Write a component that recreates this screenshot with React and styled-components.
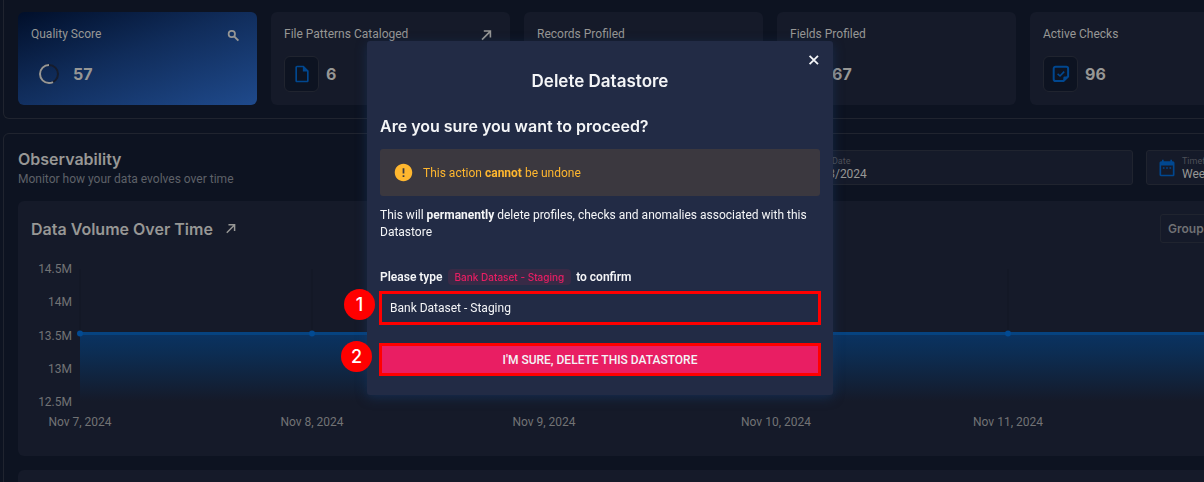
import React from "react";
import styled, { createGlobalStyle } from "styled-components";
import { MdDateRange, MdError, MdOutlineInsertDriveFile } from "react-icons/md";

const c = {
  page: "#0d1321",
  card: "#151a29",
  line: "#20242f",
  text: "#979795",
  muted: "#5e6168",
  axis: "#727375",
  blue: "#01478f",
  dialog: "#222b45",
  pink: "#e91e63",
  red: "#ff0000",
  amber: "#ffb72f",
};

const heading = 'Inter, "Liberation Sans", sans-serif';

const GlobalStyle = createGlobalStyle`
  *, *::before, *::after { box-sizing: border-box; }
  body {
    margin: 0;
    background: ${c.page};
    color: ${c.text};
    font-family: Roboto, "Liberation Sans", sans-serif;
    font-size: 12px;
    line-height: 16px;
  }
  button, input, select { font: inherit; color: inherit; }
  h1, h2, h3, p { margin: 0; }
`;

const Page = styled.div`
  height: 100vh;
  overflow: hidden;
`;

const Dashboard = styled.main`
  display: flex;
  flex-direction: column;
  gap: 14px;
  margin: 0 -80px 0 3px;
`;

const Panel = styled.section`
  padding: ${(p) => (p.$first ? "12px 14px 13px" : "14px")};
  border: 1px solid ${c.line};
  border-top-width: ${(p) => (p.$first ? 0 : "1px")};
  border-radius: ${(p) => (p.$first ? "0 0 6px 6px" : "6px")};
`;

const StatGrid = styled.div`
  display: grid;
  grid-template-columns: repeat(5, 1fr);
  gap: 14px;
`;

const StatCard = styled.article`
  display: flex;
  flex-direction: column;
  gap: 13px;
  height: 93px;
  padding: 14px 13px 12px;
  border-radius: 6px;
  background: ${(p) =>
    p.$active ? "linear-gradient(160deg, #010f2a 0%, #102c5a 45%, #1f4a8c 100%)" : c.card};
`;

const StatHead = styled.div`
  display: flex;
  align-items: center;
  justify-content: space-between;
  padding-right: 4px;
`;

const StatTitle = styled.h3`
  font-size: 12px;
  line-height: 17px;
  font-weight: 400;
`;

const IconButton = styled.button`
  display: flex;
  padding: 0;
  border: 0;
  background: none;
  cursor: pointer;
`;

const StatBody = styled.div`
  display: flex;
  align-items: center;
  gap: 7px;
`;

const StatIcon = styled.span`
  display: flex;
  align-items: center;
  justify-content: center;
  width: 35px;
  height: 36px;
  border: 1px solid ${(p) => (p.$plain ? "transparent" : c.line)};
  border-radius: 6px;
  background: ${(p) => (p.$plain ? "none" : c.page)};
  color: ${c.blue};
`;

const StatValue = styled.strong`
  font-family: ${heading};
  font-size: 16px;
  line-height: 20px;
  font-weight: 700;
`;

const SectionHead = styled.header`
  display: flex;
  justify-content: space-between;
  height: 53px;
`;

const SectionTitle = styled.h2`
  font-family: ${heading};
  font-size: 16px;
  line-height: 22px;
  font-weight: 600;
`;

const Subtitle = styled.p`
  font-size: 12px;
  line-height: 18px;
  color: ${c.muted};
`;

const Filters = styled.div`
  display: flex;
  gap: 13px;
  padding-top: 2px;
`;

const Field = styled.label`
  display: flex;
  align-items: center;
  gap: 5px;
  width: ${(p) => p.$width};
  height: 35px;
  padding: 0 10px;
  border: 1px solid ${c.line};
  border-radius: 3px;
  background: ${c.card};

  svg { flex: none; color: ${c.blue}; }
`;

const FieldText = styled.span`
  display: flex;
  flex-direction: column;
  flex: 1;
  min-width: 0;
  font-size: 9px;
  line-height: 12px;
  color: #4d4f57;
`;

const FieldInput = styled.input`
  width: 100%;
  height: 14px;
  padding: 0;
  border: 0;
  background: none;
  font-size: 12px;
  line-height: 14px;
  color: ${c.text};
`;

const FieldSelect = styled.select`
  appearance: none;
  width: 100%;
  height: 14px;
  padding: 0;
  border: 0;
  background: none;
  font-size: 12px;
  line-height: 14px;
  color: ${c.text};
`;

const ChartCard = styled.article`
  height: 255px;
  margin-bottom: 14px;
  padding: 13px;
  border-radius: 6px;
  background: ${c.card};
`;

const ChartHead = styled.div`
  display: flex;
  align-items: center;
  justify-content: space-between;
  height: 29px;
`;

const ChartTitle = styled.h3`
  display: flex;
  align-items: center;
  gap: 11px;
  font-family: ${heading};
  font-size: 16px;
  line-height: 22px;
  font-weight: 600;
`;

const GroupButton = styled.button`
  width: 96px;
  height: 29px;
  padding: 0 7px;
  border: 1px solid ${c.line};
  border-radius: 3px;
  background: none;
  font-family: ${heading};
  font-size: 12px;
  font-weight: 600;
  color: #707174;
  text-align: left;
`;

const Chart = styled.div`
  display: flex;
  gap: 8px;
  padding: 18px 16px 0 0;
`;

const YAxis = styled.div`
  display: flex;
  flex-direction: column;
  justify-content: space-between;
  width: 41px;
  height: 149px;
  text-align: right;
  color: ${c.axis};
`;

const Plot = styled.svg`
  flex: 1;
  height: 170px;
  overflow: visible;
`;

const Overlay = styled.div`
  position: fixed;
  inset: 0;
  display: flex;
  justify-content: center;
  align-items: flex-start;
  padding: 41px 4px 0 0;
`;

const Dialog = styled.div`
  display: flex;
  flex-direction: column;
  width: 466px;
  padding: 12px 13px 20px;
  border-radius: 3px;
  background: ${c.dialog};
  box-shadow: 0 3px 12px rgba(24, 62, 112, 0.45);
  color: #f4f5f7;
`;

const CloseRow = styled.div`
  display: flex;
  justify-content: flex-end;
  height: 14px;
`;

const DialogTitle = styled.h1`
  font-family: ${heading};
  font-size: 17px;
  line-height: 28px;
  font-weight: 600;
  text-align: center;
`;

const Question = styled.h2`
  margin-top: 17px;
  font-family: ${heading};
  font-size: 16px;
  line-height: 28px;
  font-weight: 600;
`;

const Alert = styled.div`
  display: flex;
  align-items: center;
  gap: 9px;
  height: 47px;
  margin-top: 9px;
  padding: 0 13px;
  border-radius: 3px;
  background: #3b383f;
  color: ${c.amber};
`;

const Description = styled.p`
  margin-top: 11px;
  font-size: 12px;
  line-height: 17px;
`;

const ConfirmForm = styled.form`
  display: flex;
  flex-direction: column;
`;

const ConfirmLabel = styled.label`
  margin-top: 28px;
  line-height: 16px;
  font-weight: 600;
`;

const Code = styled.code`
  margin: 0 2px;
  padding: 2px 7px;
  border-radius: 4px;
  background: #382a46;
  font-family: ${heading};
  font-size: 10px;
  font-weight: 500;
  color: ${c.pink};
`;

const Step = styled.div`
  position: relative;
  display: flex;
  margin-top: ${(p) => p.$gap};
`;

const Badge = styled.span`
  position: absolute;
  top: -3px;
  left: ${(p) => p.$left};
  display: flex;
  align-items: center;
  justify-content: center;
  width: 31px;
  height: 31px;
  border-radius: 50%;
  background: ${c.red};
  color: #fff;
  font-family: ${heading};
  font-size: 18px;
  font-weight: 500;
`;

const ConfirmInput = styled.input`
  width: 100%;
  height: 32px;
  padding: 0 10px;
  border: 0;
  outline: 3px solid ${c.red};
  outline-offset: -2px;
  background: ${c.dialog};
`;

const DeleteButton = styled.button`
  width: 100%;
  height: 31px;
  padding: 0;
  border: 0;
  outline: 3px solid ${c.red};
  outline-offset: -2px;
  background: ${c.pink};
  font-weight: 500;
`;

const RING = 2 * Math.PI * 9;

function ScoreRing({ value }) {
  return (
    <svg width="22" height="22" viewBox="0 0 22 22" fill="none" strokeWidth="2">
      <circle cx="11" cy="11" r="9" stroke="#161c2c" />
      <circle
        cx="11"
        cy="11"
        r="9"
        stroke={c.text}
        strokeDasharray={`${(RING * value) / 100} ${RING}`}
        transform="matrix(-1 0 0 1 22 0) rotate(-90 11 11)"
      />
    </svg>
  );
}

function SearchIcon() {
  return (
    <svg width="14" height="14" viewBox="0 0 14 14" fill="none" stroke="currentColor" strokeWidth="1.7">
      <circle cx="5.8" cy="6" r="3.2" />
      <path d="M8.2 8.4L12.4 12.6" strokeWidth="2" />
    </svg>
  );
}

function ArrowIcon({ size = 14 }) {
  return (
    <svg width={size} height={size} viewBox="0 0 14 14" fill="none" stroke="currentColor" strokeWidth="1.6">
      <path d="M3 11.6L11 3.6M4.8 3H11.4V9.6" />
    </svg>
  );
}

function CloseIcon() {
  return (
    <svg width="13" height="14" viewBox="0 0 13 14" fill="none" stroke="currentColor" strokeWidth="1.8">
      <path d="M2.6 2.8L11 11.2M11 2.8L2.6 11.2" />
    </svg>
  );
}

function CheckNote() {
  return (
    <svg width="18" height="18" viewBox="0 0 18 18" fill="none" stroke="currentColor" strokeWidth="2">
      <path d="M11.5 16H3.5A1.8 1.8 0 0 1 1.7 14.2V3.6A1.8 1.8 0 0 1 3.5 1.8H14.3A1.8 1.8 0 0 1 16.1 3.6V11.5Z" strokeLinejoin="round" />
      <path d="M11.3 16.5V13Q11.3 11.6 12.7 11.6H16.8Z" fill="currentColor" stroke="none" />
      <path d="M5.6 8.8L8 11L12.2 6.6" strokeWidth="1.6" />
    </svg>
  );
}

const stats = [
  { title: "Quality Score", value: 57, action: SearchIcon, icon: <ScoreRing value={57} />, active: true },
  { title: "File Patterns Cataloged", value: 6, action: ArrowIcon, icon: <MdOutlineInsertDriveFile size={20} /> },
  { title: "Records Profiled", value: "1.2K", icon: <MdOutlineInsertDriveFile size={20} /> },
  { title: "Fields Profiled", value: 67, icon: <MdOutlineInsertDriveFile size={20} /> },
  { title: "Active Checks", value: 96, icon: <CheckNote /> },
];

const days = ["Nov 7, 2024", "Nov 8, 2024", "Nov 9, 2024", "Nov 10, 2024", "Nov 11, 2024", "Nov 12, 2024"];
const ticks = ["14.5M", "14M", "13.5M", "13M", "12.5M"];

function VolumeChart() {
  return (
    <Chart>
      <YAxis>
        {ticks.map((t) => (
          <span key={t}>{t}</span>
        ))}
      </YAxis>
      <Plot role="img" aria-label="Data volume over time">
        <defs>
          <linearGradient id="volume" x1="0" y1="0" x2="0" y2="1">
            <stop offset="0" stopColor="#0a3362" />
            <stop offset="0.3" stopColor="#0c2d53" />
            <stop offset="1" stopColor={c.card} />
          </linearGradient>
        </defs>
        {days.map((d, i) => (
          <line key={d} x1={`${i * 20}%`} x2={`${i * 20}%`} y1="8" y2="72" stroke="#121724" />
        ))}
        <rect x="0" y="72" width="100%" height="68" fill="url(#volume)" />
        <line x1="0" x2="100%" y1="72.5" y2="72.5" stroke="#064380" strokeWidth="3" />
        {days.map((d, i) => (
          <g key={d}>
            <circle cx={`${i * 20}%`} cy="72.5" r="3" fill="#024a92" />
            <text x={`${i * 20}%`} y="165" textAnchor="middle" fill={c.axis}>
              {d}
            </text>
          </g>
        ))}
      </Plot>
    </Chart>
  );
}

export default function App() {
  return (
    <Page>
      <GlobalStyle />
      <Dashboard>
        <Panel $first>
          <StatGrid>
            {stats.map(({ title, value, action: Action, icon, active }) => (
              <StatCard key={title} $active={active}>
                <StatHead>
                  <StatTitle>{title}</StatTitle>
                  {Action && (
                    <IconButton aria-label={`Open ${title}`}>
                      <Action />
                    </IconButton>
                  )}
                </StatHead>
                <StatBody>
                  <StatIcon $plain={active}>{icon}</StatIcon>
                  <StatValue>{value}</StatValue>
                </StatBody>
              </StatCard>
            ))}
          </StatGrid>
        </Panel>
        <Panel>
          <SectionHead>
            <div>
              <SectionTitle>Observability</SectionTitle>
              <Subtitle>Monitor how your data evolves over time</Subtitle>
            </div>
            <Filters>
              <Field $width="366px">
                <MdDateRange size={20} />
                <FieldText>
                  Report Date
                  <FieldInput defaultValue="11/13/2024" />
                </FieldText>
              </Field>
              <Field $width="123px">
                <MdDateRange size={20} />
                <FieldText>
                  Timeframe
                  <FieldSelect defaultValue="Week">
                    <option>Week</option>
                    <option>Month</option>
                  </FieldSelect>
                </FieldText>
              </Field>
            </Filters>
          </SectionHead>
          <ChartCard>
            <ChartHead>
              <ChartTitle>
                Data Volume Over Time
                <ArrowIcon size={13} />
              </ChartTitle>
              <GroupButton>Group By</GroupButton>
            </ChartHead>
            <VolumeChart />
          </ChartCard>
          <ChartCard />
        </Panel>
      </Dashboard>
      <Overlay>
        <Dialog role="dialog" aria-modal="true" aria-labelledby="dialog-title">
          <CloseRow>
            <IconButton aria-label="Close">
              <CloseIcon />
            </IconButton>
          </CloseRow>
          <DialogTitle id="dialog-title">Delete Datastore</DialogTitle>
          <Question>Are you sure you want to proceed?</Question>
          <Alert role="alert">
            <MdError size={21} />
            <span>
              This action <b>cannot</b> be undone
            </span>
          </Alert>
          <Description>
            This will <b>permanently</b> delete profiles, checks and anomalies associated with this Datastore
          </Description>
          <ConfirmForm onSubmit={(e) => e.preventDefault()}>
            <ConfirmLabel htmlFor="confirm-name">
              Please type <Code>Bank Dataset - Staging</Code> to confirm
            </ConfirmLabel>
            <Step $gap="7px">
              <ConfirmInput id="confirm-name" defaultValue="Bank Dataset - Staging" />
              <Badge $left="-36px">1</Badge>
            </Step>
            <Step $gap="20px">
              <DeleteButton type="submit">I'M SURE, DELETE THIS DATASTORE</DeleteButton>
              <Badge $left="-39px">2</Badge>
            </Step>
          </ConfirmForm>
        </Dialog>
      </Overlay>
    </Page>
  );
}
